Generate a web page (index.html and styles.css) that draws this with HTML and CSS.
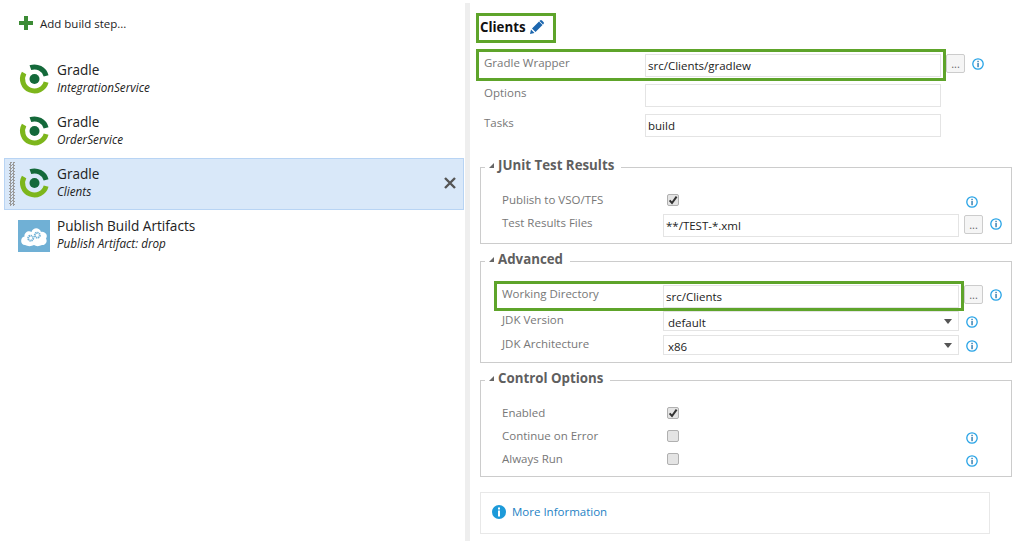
FILE: index.html
```html
<!DOCTYPE html>
<html lang="en">
<head>
    <meta charset="UTF-8">
    <title>Build definition</title>
    <link rel="stylesheet" href="styles.css">
</head>
<body>
    <svg class="defs" width="0" height="0">
        <symbol id="i-info" viewBox="0 0 12 12">
            <circle cx="6" cy="6" r="5.200" fill="none" stroke="#27a3e6" stroke-width="1.300"/>
            <rect x="5.400" y="2.800" width="1.300" height="1.400" fill="#1f6fa8"/>
            <rect x="5.400" y="5" width="1.300" height="4.200" fill="#1f6fa8"/>
        </symbol>
        <symbol id="i-check" viewBox="0 0 12 12">
            <path d="M2.600 6.400 L5 9 L9.600 2.600" fill="none" stroke="#333" stroke-width="2"/>
        </symbol>
        <symbol id="i-gradle" viewBox="0 0 32 32">
            <path d="M12.400 3.700 A12 12 0 0 1 28.100 11.900" fill="none" stroke="#14693a" stroke-width="5"/>
            <path d="M6.100 9 A12 12 0 1 0 28.100 18.100" fill="none" stroke="#7db61c" stroke-width="5"/>
            <circle cx="16.500" cy="15" r="5" fill="#14693a"/>
        </symbol>
    </svg>

    <div class="steps">
        <div class="add_step">
            <svg class="plus" width="14" height="14" viewBox="0 0 14 14"><path d="M5 0h4v5h5v4H9v5H5V9H0V5h5z" fill="#3c8b35"/></svg>
            <span>Add build step...</span>
        </div>
        <div class="step">
            <svg class="step_icon"><use href="#i-gradle"/></svg>
            <div class="step_text"><div class="step_name">Gradle</div><div class="step_sub">IntegrationService</div></div>
        </div>
        <div class="step">
            <svg class="step_icon"><use href="#i-gradle"/></svg>
            <div class="step_text"><div class="step_name">Gradle</div><div class="step_sub">OrderService</div></div>
        </div>
        <div class="step selected">
            <div class="grip"></div>
            <svg class="step_icon"><use href="#i-gradle"/></svg>
            <div class="step_text"><div class="step_name">Gradle</div><div class="step_sub">Clients</div></div>
            <svg class="remove" width="14" height="14" viewBox="0 0 14 14"><path d="M2 2 L12 12 M12 2 L2 12" stroke="#555" stroke-width="2.400"/></svg>
        </div>
        <div class="step">
            <svg class="step_icon" viewBox="0 0 32 32">
                <rect width="32" height="32" fill="#70b0d5"/>
                <path d="M7 25 C2 25 2 17 6.500 16.500 C6 12 11 10 13.500 12 C15 7 21.500 7 23 12 C27 11 30.500 15.500 28 18.500 C30 22 27 25.500 24 25 C21 26.500 18 26.500 16 25 C13.500 26.500 9.500 26.500 7 25 Z" fill="#fff"/>
                <circle cx="12.700" cy="18.200" r="2.500" fill="none" stroke="#70b0d5" stroke-width="2" stroke-dasharray="1.300 .6"/>
                <circle cx="19.300" cy="15.200" r="2.500" fill="none" stroke="#70b0d5" stroke-width="2" stroke-dasharray="1.300 .6"/>
            </svg>
            <div class="step_text"><div class="step_name">Publish Build Artifacts</div><div class="step_sub">Publish Artifact: drop</div></div>
        </div>
    </div>

    <div class="splitter"></div>

    <div class="details">
        <div class="details_title">
            <span>Clients</span>
            <svg width="14" height="14" viewBox="0 0 14 14"><path d="M0 14 L1 9.500 L4.500 13 Z M2 8.500 L9 1.500 L12.500 5 L5.500 12 Z M10 .5 Q11 -.3 12 .5 L13.500 2 Q14.300 3 13.500 4 L13 4.500 L9.500 1 Z" fill="#1c66ae"/></svg>
        </div>

        <div class="row row_tall marked">
            <label>Gradle Wrapper</label>
            <input type="text" value="src/Clients/gradlew">
            <button>...</button>
            <svg class="info info_far"><use href="#i-info"/></svg>
        </div>
        <div class="row row_tall">
            <label>Options</label>
            <input type="text">
        </div>
        <div class="row row_tall">
            <label>Tasks</label>
            <input type="text" value="build">
        </div>

        <fieldset class="group">
            <legend>JUnit Test Results</legend>
            <div class="row">
                <label>Publish to VSO/TFS</label>
                <div class="check"><svg><use href="#i-check"/></svg></div>
                <svg class="info"><use href="#i-info"/></svg>
            </div>
            <div class="row">
                <label>Test Results Files</label>
                <input type="text" value="**/TEST-*.xml">
                <button class="btn_low">...</button>
                <svg class="info info_far"><use href="#i-info"/></svg>
            </div>
        </fieldset>

        <fieldset class="group group_tight">
            <legend>Advanced</legend>
            <div class="row row_wide marked marked_small">
                <label>Working Directory</label>
                <input type="text" value="src/Clients">
                <button>...</button>
                <svg class="info info_far"><use href="#i-info"/></svg>
            </div>
            <div class="row row_mid">
                <label>JDK Version</label>
                <div class="select"><select><option>default</option></select></div>
                <svg class="info"><use href="#i-info"/></svg>
            </div>
            <div class="row row_mid">
                <label>JDK Architecture</label>
                <div class="select"><select><option>x86</option></select></div>
                <svg class="info"><use href="#i-info"/></svg>
            </div>
        </fieldset>

        <fieldset class="group group_tight group_short">
            <legend>Control Options</legend>
            <div class="row">
                <label>Enabled</label>
                <div class="check"><svg><use href="#i-check"/></svg></div>
            </div>
            <div class="row">
                <label>Continue on Error</label>
                <div class="check"></div>
                <svg class="info"><use href="#i-info"/></svg>
            </div>
            <div class="row">
                <label>Always Run</label>
                <div class="check"></div>
                <svg class="info"><use href="#i-info"/></svg>
            </div>
        </fieldset>

        <div class="more_info">
            <svg width="14" height="14" viewBox="0 0 14 14">
                <circle cx="7" cy="7" r="7" fill="#1d9ad9"/>
                <rect x="6" y="2.500" width="2" height="2" fill="#fff"/>
                <rect x="6" y="5.500" width="2" height="6" fill="#fff"/>
            </svg>
            <a href="#">More Information</a>
        </div>
    </div>
</body>
</html>
```

FILE: styles.css
```css
body {
    font-family: 'Open Sans', 'Noto Sans', sans-serif;
    font-size: 11.5px;
    margin: 0;
    display: flex;
    height: 100vh;
    overflow: hidden;
    background-color: #ffffff;
    color: #222222;
}

.defs {
    position: absolute;
}

/* left column */
.steps {
    width: 465px;
    flex-shrink: 0;
}

.add_step {
    display: flex;
    align-items: center;
    gap: 7px;
    height: 54px;
    padding: 0 0 8px 19px;
    box-sizing: border-box;
    font-size: 11.5px;
}

.step {
    position: relative;
    display: flex;
    align-items: flex-start;
    gap: 7px;
    box-sizing: border-box;
    width: 460px;
    height: 52px;
    margin-left: 4px;
    padding: 9px 6px 0 13px;
    border: 1px solid transparent;
}

.selected {
    background-color: #d9e8f9;
    border-color: #b8d4f4;
}

.grip {
    position: absolute;
    left: 4px;
    top: 3px;
    bottom: 3px;
    width: 6px;
    background: repeating-conic-gradient(#9a9a9a 0 25%, transparent 0 50%) 0 0 / 3px 3px;
}

.step_icon {
    width: 32px;
    height: 32px;
    flex-shrink: 0;
}

.step_text {
    margin-top: -3px;
}

.step_name {
    font-size: 13.6px;
    line-height: 18px;
}

.step_sub {
    font-size: 11.7px;
    font-style: italic;
    line-height: 17px;
}

.remove {
    margin: 8px 0 0 auto;
}

.splitter {
    width: 5px;
    flex-shrink: 0;
    margin-top: 3px;
    background-color: #eeeeee;
}

/* right column */
.details {
    flex: 1;
    padding: 13px 0 0 10px;
    box-sizing: border-box;
    min-width: 0;
}

.details_title {
    display: flex;
    align-items: center;
    gap: 4px;
    box-sizing: border-box;
    width: 80px;
    height: 30px;
    margin: 0 0 10px -4px;
    padding: 0 0 3px 1px;
    border: 3px solid #5ea42a;
    font-size: 13.3px;
    font-weight: 700;
    color: #111111;
}

.row {
    position: relative;
    display: grid;
    grid-template-columns: 161px 296px 26px 26px;
    align-items: start;
    height: 23px;
}

.details > .row {
    margin-left: 4px;
}

.row_tall {
    height: 30px;
}

.row_wide {
    height: 26px;
}

.row_mid {
    height: 24px;
}

.marked::after {
    content: "";
    position: absolute;
    left: -8px;
    top: -4px;
    width: 470px;
    height: 32px;
    box-sizing: border-box;
    border: 3px solid #5ea42a;
    pointer-events: none;
}

.marked_small::after {
    top: -3px;
    height: 30px;
}

label {
    font-size: 11.5px;
    line-height: 20px;
    color: #777777;
}

input[type="text"],
select {
    box-sizing: border-box;
    width: 296px;
    margin: 1px 0 0;
    padding: 0 2px;
    border: 1px solid #e4e4e4;
    border-radius: 0;
    outline: none;
    background-color: #ffffff;
    font-family: inherit;
    font-size: 11.5px;
    color: #222222;
}

input[type="text"] {
    height: 23px;
}

.select {
    position: relative;
}

select {
    display: block;
    height: 20px;
    padding: 2px 2px 0 4px;
    appearance: none;
}

.select::after {
    content: "";
    position: absolute;
    right: 7px;
    top: 9px;
    border-left: 4px solid transparent;
    border-right: 4px solid transparent;
    border-top: 5px solid #555555;
}

button {
    width: 19px;
    height: 19px;
    margin: 1px 0 0 5px;
    padding: 0;
    border: 1px solid #cccccc;
    border-radius: 2px;
    background-color: #f5f5f5;
    font-family: inherit;
    font-size: 11px;
    color: #666666;
}

.btn_low {
    margin-top: 2px;
}

.check {
    box-sizing: border-box;
    width: 12px;
    height: 12px;
    margin: 4px 0 0 4px;
    border: 1px solid #b0b0b0;
    border-radius: 2px;
    background-color: #e4e4e4;
}

.check svg {
    display: block;
    width: 12px;
    height: 12px;
    margin: -1px;
}

.info {
    width: 12px;
    height: 12px;
    margin: 6px 0 0 7px;
    grid-column: 3;
}

.info_far {
    margin: 5px 0 0 5px;
    grid-column: 4;
}

.group {
    box-sizing: border-box;
    width: 531px;
    margin: 5px 0 0;
    padding: 10px 0 7px 21px;
    border: 1px solid #cccccc;
}

.details > .row + .group {
    margin-top: 12px;
}

.group_tight {
    padding-bottom: 4px;
}

.group_short {
    width: 507px;
}

legend {
    position: relative;
    margin-left: -17px;
    padding: 0 7px 5px 13px;
    font-size: 13.3px;
    font-weight: 700;
    line-height: 20px;
    color: #5f5f5f;
}

legend::before {
    content: "";
    position: absolute;
    left: 4px;
    top: 8px;
    border-left: 5px solid transparent;
    border-bottom: 5px solid #666666;
}

.more_info {
    display: flex;
    align-items: center;
    gap: 6px;
    box-sizing: border-box;
    width: 510px;
    height: 42px;
    margin-top: 15px;
    padding: 0 0 3px 11px;
    border: 1px solid #e8e8e8;
}

.more_info a {
    color: #1e82c4;
    text-decoration: none;
    font-size: 11.5px;
}
```
